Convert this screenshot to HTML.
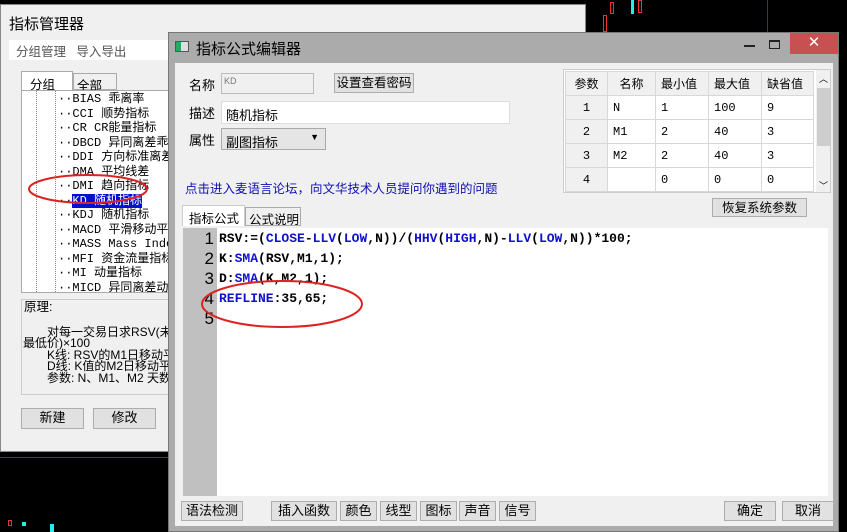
<!DOCTYPE html>
<html><head><meta charset="utf-8"><style>
*{margin:0;padding:0;box-sizing:border-box}
body{width:847px;height:532px;background:#000;position:relative;overflow:hidden;font-family:"Liberation Sans","Noto Sans CJK SC",sans-serif;font-size:12px;color:#000}
.a{position:absolute}
.btn{position:absolute;background:#e1e1e1;border:1px solid #adadad;text-align:center;font-size:13px;line-height:18px}
.mono{font-family:"Liberation Mono","Noto Sans CJK SC",monospace}
.tree div{height:14.5px;line-height:14.5px;white-space:nowrap;font-family:"Liberation Mono","Noto Sans CJK SC",monospace;font-size:12px}
table{border-collapse:collapse}
td{border:1px solid #d8d8d8;height:24px;font-size:12px;padding-left:5px}
.code div{height:20px;line-height:20px;font-family:"Liberation Mono","Noto Sans CJK SC",monospace;font-weight:bold;font-size:13px;white-space:pre}
.b{color:#1010d0}
.ln div{height:20px;line-height:20px;text-align:right;padding-right:3px;font-size:17px}
</style></head><body>
<div class="a" style="left:0;top:457px;width:168px;height:1px;background:#d00"></div>
<div class="a" style="left:767px;top:0;width:1px;height:32px;background:#c00"></div>
<div class="a" style="left:603px;top:15px;width:4px;height:17px;border:1px solid #e33"></div>
<div class="a" style="left:610px;top:2px;width:4px;height:12px;border:1px solid #e33"></div>
<div class="a" style="left:631px;top:0;width:3px;height:14px;background:#2ee"></div>
<div class="a" style="left:638px;top:0;width:4px;height:13px;border:1px solid #e33"></div>
<div class="a" style="left:8px;top:520px;width:4px;height:6px;border:1px solid #e33"></div>
<div class="a" style="left:22px;top:522px;width:4px;height:4px;background:#2ee"></div>
<div class="a" style="left:50px;top:524px;width:4px;height:8px;background:#2ee"></div>

<div class="a" style="left:0;top:4px;width:586px;height:448px;background:#f0f0f0;border:1px solid #888">
 <div class="a" style="left:8px;top:8px;font-size:15px">指标管理器</div>
 <div class="a" style="left:8px;top:35px;width:576px;height:20px;background:#fff"></div>
 <div class="a" style="left:15px;top:36px;color:#555;font-size:12.5px">分组管理&nbsp;&nbsp;&nbsp;导入导出</div>
 <div class="a" style="left:20px;top:66px;width:52px;height:19px;background:#fff;border:1px solid #aaa;border-bottom:none;padding:2px 0 0 8px;font-size:12.5px">分组</div>
 <div class="a" style="left:72px;top:68px;width:44px;height:17px;background:#f0f0f0;border:1px solid #aaa;padding:1px 0 0 3px;font-size:12.5px">全部</div>
 <div class="a tree" style="left:20px;top:85px;width:170px;height:203px;background:#fff;border:1px solid #aaa;overflow:hidden;padding-top:1px">
  <div class="a" style="left:14px;top:0;width:0;height:203px;border-left:1px dotted #888"></div>
  <div class="a" style="left:33px;top:0;width:0;height:203px;border-left:1px dotted #888"></div>
  <div style="padding-left:36px">··BIAS 乖离率</div>
  <div style="padding-left:36px">··CCI 顺势指标</div>
  <div style="padding-left:36px">··CR CR能量指标</div>
  <div style="padding-left:36px">··DBCD 异同离差乖离率</div>
  <div style="padding-left:36px">··DDI 方向标准离差指数</div>
  <div style="padding-left:36px">··DMA 平均线差</div>
  <div style="padding-left:36px">··DMI 趋向指标</div>
  <div style="padding-left:36px">··<span style="background:#0010d0;color:#fff">KD 随机指标</span></div>
  <div style="padding-left:36px">··KDJ 随机指标</div>
  <div style="padding-left:36px">··MACD 平滑移动平均线</div>
  <div style="padding-left:36px">··MASS Mass Index</div>
  <div style="padding-left:36px">··MFI 资金流量指标</div>
  <div style="padding-left:36px">··MI 动量指标</div>
  <div style="padding-left:36px">··MICD 异同离差动力指数</div>
 </div>
 <div class="a" style="left:20px;top:294px;width:170px;height:96px;background:#f0f0f0;border:1px solid #ccc;font-size:12px;line-height:11.5px;overflow:hidden">
  <div style="padding:2px 0 0 2px;font-size:12.5px">原理:</div>
  <div style="margin-top:13px;padding-left:25px;white-space:nowrap">对每一交易日求RSV(未成熟随机值)</div>
  <div style="padding-left:1px;white-space:nowrap">最低价)×100</div>
  <div style="padding-left:25px;white-space:nowrap">K线: RSV的M1日移动平均</div>
  <div style="padding-left:25px;white-space:nowrap">D线: K值的M2日移动平均</div>
  <div style="padding-left:25px;white-space:nowrap">参数: N、M1、M2 天数</div>
 </div>
 <div class="btn" style="left:20px;top:403px;width:63px;height:21px">新建</div>
 <div class="btn" style="left:92px;top:403px;width:63px;height:21px">修改</div>
</div>
<svg class="a" style="left:0;top:0" width="847" height="532">
<ellipse cx="88" cy="189" rx="59" ry="14" fill="none" stroke="#d22" stroke-width="2"/>
</svg>

<div class="a" style="left:168px;top:32px;width:671px;height:500px;background:#ababab;border:1px solid #777">
 <div class="a" style="left:6px;top:8px;width:14px;height:11px;background:#ddd;border:1px solid #555"><div style="width:5px;height:9px;background:#2a6"></div></div>
 <div class="a" style="left:27px;top:5px;font-size:15px">指标公式编辑器</div>
 <div class="a" style="left:575px;top:12px;width:11px;height:2px;background:#222"></div>
 <div class="a" style="left:600px;top:7px;width:11px;height:9px;border:1px solid #222;border-top-width:2px"></div>
 <div class="a" style="left:621px;top:0;width:48px;height:21px;background:#c75050;color:#fff;text-align:center;font-size:15px;line-height:20px">✕</div>
 <div class="a" style="left:6px;top:30px;width:658px;height:463px;background:#f0f0f0"></div>
 <div class="a" style="left:20px;top:42px;font-size:13px">名称</div>
 <div class="a" style="left:52px;top:40px;width:93px;height:21px;border:1px solid #bbb;background:#f0f0f0;font-size:9px;color:#777;padding:2px">KD</div>
 <div class="btn" style="left:165px;top:40px;width:80px;height:20px;font-size:12.5px">设置查看密码</div>
 <div class="a" style="left:20px;top:70px;font-size:13px">描述</div>
 <div class="a" style="left:52px;top:68px;width:289px;height:23px;border:1px solid #ddd;background:#fff;padding:3px 4px;font-size:13px">随机指标</div>
 <div class="a" style="left:20px;top:97px;font-size:13px">属性</div>
 <div class="a" style="left:52px;top:95px;width:105px;height:22px;border:1px solid #aaa;background:#e5e5e5;padding:3px 4px;font-size:13px">副图指标<span style="position:absolute;right:6px;top:3px;font-size:9px">▼</span></div>
 <div class="a" style="left:16px;top:145px;color:#1010b0;font-size:12.5px">点击进入麦语言论坛，向文华技术人员提问你遇到的问题</div>
 <div class="a" style="left:394px;top:36px;width:268px;height:124px;background:#fff;border:1px solid #ccc;overflow:hidden">
  <table class="a" style="left:1px;top:1px">
   <tr style="background:#f0f0f0"><td style="width:42px;text-align:center;padding:0">参数</td><td style="width:48px;text-align:center;padding:0">名称</td><td style="width:53px">最小值</td><td style="width:53px">最大值</td><td style="width:52px">缺省值</td></tr>
   <tr class="mono"><td style="background:#f0f0f0;text-align:center;padding:0">1</td><td>N</td><td>1</td><td>100</td><td>9</td></tr>
   <tr class="mono"><td style="background:#f0f0f0;text-align:center;padding:0">2</td><td>M1</td><td>2</td><td>40</td><td>3</td></tr>
   <tr class="mono"><td style="background:#f0f0f0;text-align:center;padding:0">3</td><td>M2</td><td>2</td><td>40</td><td>3</td></tr>
   <tr class="mono"><td style="background:#f0f0f0;text-align:center;padding:0">4</td><td></td><td>0</td><td>0</td><td>0</td></tr>
  </table>
  <div class="a" style="left:252px;top:0;width:16px;height:124px;background:#f0f0f0"><div style="position:absolute;top:18px;left:1px;width:14px;height:58px;background:#cdcdcd"></div><div style="position:absolute;top:2px;left:3px;font-size:9px">︿</div><div style="position:absolute;bottom:2px;left:3px;font-size:9px">﹀</div></div>
 </div>
 <div class="btn" style="left:543px;top:165px;width:95px;height:19px;font-size:12.5px">恢复系统参数</div>
 <div class="a" style="left:13px;top:172px;width:63px;height:21px;background:#fff;border:1px solid #ccc;border-bottom:none;padding:2px 0 0 6px;font-size:12.5px">指标公式</div>
 <div class="a" style="left:76px;top:174px;width:56px;height:19px;background:#f0f0f0;border:1px solid #aaa;padding:1px 0 0 3px;font-size:12.5px">公式说明</div>
 <div class="a" style="left:14px;top:195px;width:645px;height:268px;background:#fff">
  <div class="a ln" style="left:0;top:0;width:34px;height:268px;background:#c0c0c0;padding-top:1px"><div>1</div><div>2</div><div>3</div><div>4</div><div>5</div></div>
  <div class="a code" style="left:36px;top:1px">
   <div>RSV:=(<span class="b">CLOSE</span>-<span class="b">LLV</span>(<span class="b">LOW</span>,N))/(<span class="b">HHV</span>(<span class="b">HIGH</span>,N)-<span class="b">LLV</span>(<span class="b">LOW</span>,N))*100;</div>
   <div>K:<span class="b">SMA</span>(RSV,M1,1);</div>
   <div>D:<span class="b">SMA</span>(K,M2,1);</div>
   <div><span class="b">REFLINE</span>:35,65;</div>
  </div>
 </div>
 <div class="btn" style="left:12px;top:468px;width:62px;height:20px">语法检测</div>
 <div class="btn" style="left:102px;top:468px;width:66px;height:20px">插入函数</div>
 <div class="btn" style="left:171px;top:468px;width:37px;height:20px">颜色</div>
 <div class="btn" style="left:211px;top:468px;width:37px;height:20px">线型</div>
 <div class="btn" style="left:251px;top:468px;width:37px;height:20px">图标</div>
 <div class="btn" style="left:290px;top:468px;width:37px;height:20px">声音</div>
 <div class="btn" style="left:330px;top:468px;width:37px;height:20px">信号</div>
 <div class="btn" style="left:555px;top:468px;width:52px;height:20px">确定</div>
 <div class="btn" style="left:613px;top:468px;width:52px;height:20px">取消</div>
</div>
<svg class="a" style="left:0;top:0" width="847" height="532">
<ellipse cx="282" cy="304" rx="80" ry="23" fill="none" stroke="#d22" stroke-width="2"/>
</svg>
</body></html>
